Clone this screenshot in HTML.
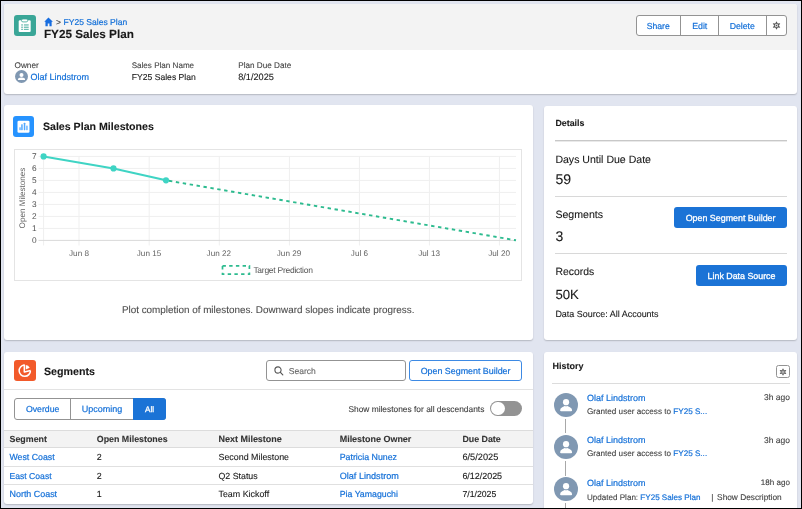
<!DOCTYPE html>
<html><head><meta charset="utf-8">
<style>
*{box-sizing:border-box;margin:0;padding:0}
html,body{width:802px;height:509px;overflow:hidden}
body{background:#e1e5f0;font-family:"Liberation Sans",Arial,sans-serif;color:#181818;position:relative;font-size:10px;text-rendering:geometricPrecision}
.card{position:absolute;background:#fff;border-radius:3px;box-shadow:0 1px 1.5px rgba(0,0,0,.2)}
.abs{position:absolute;white-space:nowrap;line-height:normal;-webkit-text-stroke:.1px}
.lnk,.abs a{-webkit-text-stroke:.2px}
.wb{-webkit-text-stroke:.3px}
a,.lnk{color:#1470d8;text-decoration:none}
.b{font-weight:bold}
.btn{position:absolute;border:1px solid #939393;border-radius:3px;background:#fff}
.btnb{position:absolute;border-radius:3px;background:#1b73d6}
.hr{position:absolute;background:#d8d8d8;height:1px}
</style></head><body>

<!-- header card -->
<div class="card" style="left:3.7px;top:4.4px;width:793.6px;height:89.9px;overflow:hidden">
  <div style="position:absolute;left:0;top:0;right:0;height:45.2px;background:#f3f3f3"></div>
</div>
<div class="abs" style="left:14.3px;top:15px;width:21.4px;height:21.1px;background:#3aa697;border-radius:3px"></div>
<svg class="abs" style="left:14.3px;top:15px" width="21.4" height="21.4" viewBox="0 0 21.4 21.4">
  <rect x="4.7" y="5.3" width="12" height="11.7" rx="1.1" fill="#fff"/>
  <rect x="7.5" y="4" width="6.2" height="2.9" rx="1.45" fill="#fff" stroke="#3aa697" stroke-width=".8"/>
  <g fill="#3aa697" opacity=".75"><rect x="7.2" y="9.3" width="1.7" height="1.3"/><rect x="9.9" y="9.3" width="4.8" height="1.3"/>
  <rect x="7.2" y="11.6" width="1.7" height="1.3"/><rect x="9.9" y="11.6" width="4.8" height="1.3"/>
  <rect x="7.2" y="13.8" width="1.7" height="1.2"/><rect x="9.9" y="13.8" width="4.8" height="1.2"/></g>
</svg>
<svg class="abs" style="left:43.6px;top:17.2px" width="9.2" height="9.6" viewBox="0 0 9.2 9.6"><path d="M4.45 .4 L.3 4.7 H1.45 V9.2 H3.75 V6.4 H5.45 V9.2 H7.65 V4.7 H8.9 Z" fill="#176de0"/></svg>
<svg class="abs" style="left:14.9px;top:70.2px" width="13" height="13" viewBox="0 0 13 13"><circle cx="6.5" cy="6.5" r="6.5" fill="#8098b2"/><circle cx="6.5" cy="4.9" r="2" fill="#fff"/><path d="M2.9 9.9 Q2.9 7.6 6.5 7.6 Q10.1 7.6 10.1 9.9 Z" fill="#fff"/></svg>

<!-- header buttons -->
<div class="btn" style="left:636.1px;top:15px;width:151px;height:21px"></div>
<div class="abs" style="left:680px;top:15px;width:1px;height:21px;background:#939393"></div>
<div class="abs" style="left:718.2px;top:15px;width:1px;height:21px;background:#939393"></div>
<div class="abs" style="left:766px;top:15px;width:1px;height:21px;background:#939393"></div>
<svg class="abs" style="left:771.8px;top:21px" width="9" height="9" viewBox="0 0 10 10"><g fill="#555"><path d="M5 0.2L6.35 2.66L9.16 2.6L7.7 5L9.16 7.4L6.35 7.34L5 9.8L3.65 7.34L0.84 7.4L2.3 5L0.84 2.6L3.65 2.66Z"/></g><circle cx="5" cy="5" r="1.9" fill="#ddd"/><circle cx="5" cy="5" r="0.8" fill="#555"/></svg>

<!-- chart card -->
<div class="card" style="left:3.7px;top:105px;width:529.3px;height:235.2px"></div>
<div class="abs" style="left:13.2px;top:116px;width:21.2px;height:21.4px;background:#2693ff;border-radius:3px"></div>
<svg class="abs" style="left:13.2px;top:116px" width="21.2" height="21.4" viewBox="0 0 21.2 21.4"><rect x="4.5" y="4.7" width="12" height="12" rx="1.3" fill="#fff"/><g fill="#2693ff" opacity=".8"><rect x="6.4" y="11.2" width="1.3" height="3" rx=".4"/><rect x="8.2" y="8.2" width="1.5" height="6" rx=".4"/><rect x="10.8" y="6.8" width="1.5" height="7.4" rx=".4"/><rect x="13.3" y="9.5" width="1.3" height="4.7" rx=".4"/></g></svg>

<div class="abs" style="left:14px;top:148.8px;width:508.2px;height:132px;border:1px solid #e4e4e4"></div>
<svg class="abs" style="left:0;top:0;will-change:transform" width="802" height="509" viewBox="0 0 802 509" font-family="Liberation Sans, Arial, sans-serif" text-rendering="geometricPrecision">
 <g stroke="#efefef" stroke-width="1" fill="none">
  <path d="M38.5 156.4H516M38.5 168.4H516M38.5 180.4H516M38.5 192.4H516M38.5 204.4H516M38.5 216.4H516M38.5 228.4H516"/>
  <path d="M43.6 156V245.5M79 156V245.5M149.2 156V245.5M219.3 156V245.5M289.4 156V245.5M359.4 156V245.5M429.4 156V245.5M499.4 156V245.5"/>
 </g>
 <path d="M38.5 240.4H516" stroke="#d9d9d9" stroke-width="1"/>
 <g font-size="8.3" fill="#505050" text-anchor="end">
  <text x="36.6" y="158.8">7</text><text x="36.6" y="170.8">6</text><text x="36.6" y="182.8">5</text><text x="36.6" y="194.8">4</text><text x="36.6" y="206.8">3</text><text x="36.6" y="218.8">2</text><text x="36.6" y="230.8">1</text><text x="36.6" y="242.8">0</text>
 </g>
 <g font-size="8.15" fill="#636363" text-anchor="middle">
  <text x="79" y="255.8">Jun 8</text><text x="149" y="255.8">Jun 15</text><text x="218.8" y="255.8">Jun 22</text><text x="289" y="255.8">Jun 29</text><text x="359.4" y="255.8">Jul 6</text><text x="429.1" y="255.8">Jul 13</text><text x="499.1" y="255.8">Jul 20</text>
 </g>
 <text font-size="8.1" fill="#666" text-anchor="middle" transform="translate(25.1 198) rotate(-90)">Open Milestones</text>
 <path d="M43.6 156.4L113.5 168.4L166 180.3" stroke="#3fd4c4" stroke-width="2" fill="none" stroke-linejoin="round"/>
 <path d="M166 180.3L516 240.3" stroke="#2dbb8f" stroke-width="1.9" fill="none" stroke-dasharray="3.4 3.6" stroke-dashoffset="-3"/>
 <g fill="#3fd4c4"><circle cx="43.6" cy="156.4" r="3.1"/><circle cx="113.5" cy="168.4" r="3.1"/><circle cx="166" cy="180.3" r="3.1"/></g>
 <rect x="222.5" y="265.8" width="26.9" height="8.4" fill="none" stroke="#2dbb8f" stroke-width="1.7" stroke-dasharray="3.4 3.3"/>
 <text x="253.4" y="273.2" font-size="8.5" fill="#555" textLength="59.5">Target Prediction</text>
</svg>

<!-- details card -->
<div class="card" style="left:544px;top:106px;width:253.3px;height:234.2px"></div>
<div class="hr" style="left:555.4px;top:140px;width:231.6px;height:1px;background:#c8c8c8"></div><div class="hr" style="left:555.4px;top:141px;width:231.6px;height:1px;background:#e9e9e9"></div>
<div class="hr" style="left:555.4px;top:196.1px;width:231.6px"></div>
<div class="btnb" style="left:674.3px;top:207.1px;width:112.7px;height:20.9px"></div>
<div class="hr" style="left:555.4px;top:253.3px;width:231.6px"></div>
<div class="btnb" style="left:696.2px;top:264.6px;width:90.8px;height:21.4px"></div>

<!-- segments card -->
<div class="card" style="left:3.7px;top:352px;width:529.3px;height:151.9px"></div>
<div class="abs" style="left:14.3px;top:360px;width:21.4px;height:21.1px;background:#f25a2a;border-radius:3px"></div>
<svg class="abs" style="left:14.3px;top:360px" width="21.4" height="21.4" viewBox="0 0 21.4 21.4"><path d="M10.3 5.05A5.65 5.65 0 1 0 16.45 10.7" fill="none" stroke="#fff" stroke-width="1.5"/><path d="M10.3 4.5V11.9L16.6 10.5" fill="none" stroke="#fff" stroke-width="1.5" stroke-linejoin="round"/><path d="M11.74 9.5V5.1A4.4 4.4 0 0 1 15.73 7.64Z" fill="#fff"/></svg>
<div class="btn" style="left:265.9px;top:360px;width:140.4px;height:21px"></div>
<svg class="abs" style="left:274.4px;top:366px" width="10" height="10" viewBox="0 0 10 10"><circle cx="4" cy="4" r="3.1" fill="none" stroke="#555" stroke-width="1.1"/><path d="M6.2 6.2L8.8 8.8" stroke="#555" stroke-width="1.2" stroke-linecap="round"/></svg>
<div class="btn" style="left:408.8px;top:360px;width:113px;height:21px;border-color:#3d8ae4"></div>
<div class="hr" style="left:3.7px;top:388.8px;width:529.3px;background:#e3e3e3"></div>
<div class="btn" style="left:14.2px;top:398px;width:151.6px;height:22px"></div>
<div class="abs" style="left:70.2px;top:398px;width:1px;height:22px;background:#939393"></div>
<div class="abs" style="left:133.2px;top:398px;width:32.6px;height:22px;background:#1b73d6;border-radius:0 3px 3px 0"></div>
<div class="abs" style="left:490.2px;top:400.9px;width:31.6px;height:15.4px;border-radius:7.7px;background:#939393"></div>
<div class="abs" style="left:491.3px;top:401.9px;width:13.4px;height:13.4px;border-radius:7px;background:#fff"></div>

<div class="abs" style="left:3.7px;top:430.3px;width:529.3px;height:17.8px;background:#f3f3f3;border-top:1px solid #dcdcdc;border-bottom:1px solid #dcdcdc"></div>
<div class="hr" style="left:3.7px;top:466px;width:529.3px;background:#e0e0e0"></div>
<div class="hr" style="left:3.7px;top:484px;width:529.3px;background:#e0e0e0"></div>

<!-- history card -->
<div class="card" style="left:544px;top:352.2px;width:253.3px;height:165px"></div>
<div class="btn" style="left:776.2px;top:364.6px;width:13.7px;height:13.5px;border-radius:2.5px"></div>
<svg class="abs" style="left:779.1px;top:367.5px" width="8" height="8" viewBox="0 0 10 10"><g fill="#555"><path d="M5 0.2L6.35 2.66L9.16 2.6L7.7 5L9.16 7.4L6.35 7.34L5 9.8L3.65 7.34L0.84 7.4L2.3 5L0.84 2.6L3.65 2.66Z"/></g><circle cx="5" cy="5" r="1.9" fill="#ddd"/><circle cx="5" cy="5" r="0.8" fill="#555"/></svg>
<div class="hr" style="left:552.4px;top:383px;width:237.5px;background:#dcdcdc"></div>
<div class="abs" style="left:565.3px;top:418.7px;width:1.1px;height:14.7px;background:#a8a8a8"></div>
<div class="abs" style="left:565.3px;top:461px;width:1.1px;height:14.8px;background:#a8a8a8"></div>
<div class="abs" style="left:565.3px;top:503.2px;width:1.1px;height:6px;background:#a8a8a8"></div>

<svg class="abs" style="left:553.85px;top:393px" width="24" height="24" viewBox="0 0 24 24"><circle cx="12" cy="12" r="12" fill="#8098b2"/><circle cx="12.05" cy="9.2" r="3.1" fill="#fff"/><path d="M6.1 17.3Q6.1 15 8.2 14.2Q10 13.4 10.6 12.9Q12.05 13.7 13.5 12.9Q14.1 13.4 15.9 14.2Q18.1 15 18.1 17.3Q18.1 18.3 17.1 18.3H7.1Q6.1 18.3 6.1 17.3Z" fill="#fff"/></svg>
<svg class="abs" style="left:553.85px;top:435.3px" width="24" height="24" viewBox="0 0 24 24"><circle cx="12" cy="12" r="12" fill="#8098b2"/><circle cx="12.05" cy="9.2" r="3.1" fill="#fff"/><path d="M6.1 17.3Q6.1 15 8.2 14.2Q10 13.4 10.6 12.9Q12.05 13.7 13.5 12.9Q14.1 13.4 15.9 14.2Q18.1 15 18.1 17.3Q18.1 18.3 17.1 18.3H7.1Q6.1 18.3 6.1 17.3Z" fill="#fff"/></svg>
<svg class="abs" style="left:553.85px;top:477.3px" width="24" height="24" viewBox="0 0 24 24"><circle cx="12" cy="12" r="12" fill="#8098b2"/><circle cx="12.05" cy="9.2" r="3.1" fill="#fff"/><path d="M6.1 17.3Q6.1 15 8.2 14.2Q10 13.4 10.6 12.9Q12.05 13.7 13.5 12.9Q14.1 13.4 15.9 14.2Q18.1 15 18.1 17.3Q18.1 18.3 17.1 18.3H7.1Q6.1 18.3 6.1 17.3Z" fill="#fff"/></svg>

<div style="position:absolute;left:0;top:0;width:802px;height:509px;will-change:transform">
<div class="abs" id="bcg" style="left:55.90px;top:17.00px;font-size:8.50px;color:#404040;">&gt;</div>
<div class="abs lnk" id="bcl" style="left:63.60px;top:17.00px;font-size:8.54px;">FY25 Sales Plan</div>
<div class="abs b" id="ttl" style="left:43.90px;top:28.00px;font-size:11.74px;color:#181818;">FY25 Sales Plan</div>
<div class="abs" id="l1" style="left:14.50px;top:61.00px;font-size:8.22px;color:#444;">Owner</div>
<div class="abs" id="l2" style="left:131.70px;top:61.00px;font-size:8.08px;color:#444;">Sales Plan Name</div>
<div class="abs" id="l3" style="left:238.20px;top:61.00px;font-size:8.17px;color:#444;">Plan Due Date</div>
<div class="abs lnk" id="v1" style="left:30.40px;top:72.00px;font-size:9.02px;">Olaf Lindstrom</div>
<div class="abs" id="v2" style="left:131.70px;top:72.00px;font-size:8.62px;color:#181818;">FY25 Sales Plan</div>
<div class="abs" id="v3" style="left:238.20px;top:72.00px;font-size:9.17px;color:#181818;">8/1/2025</div>
<div class="abs lnk" id="hb1" style="left:646.70px;top:21.00px;font-size:8.66px;">Share</div>
<div class="abs lnk" id="hb2" style="left:692.20px;top:21.00px;font-size:8.77px;">Edit</div>
<div class="abs lnk" id="hb3" style="left:729.70px;top:21.00px;font-size:8.72px;">Delete</div>
<div class="abs b" id="ct" style="left:42.90px;top:121.00px;font-size:10.63px;color:#181818;">Sales Plan Milestones</div>
<div class="abs" id="cap" style="left:121.90px;top:305.00px;font-size:9.88px;color:#4e4e4e;">Plot completion of milestones. Downward slopes indicate progress.</div>
<div class="abs b" id="dt" style="left:555.40px;top:118.00px;font-size:8.85px;color:#181818;">Details</div>
<div class="abs" id="d1" style="left:555.40px;top:154.00px;font-size:10.56px;color:#181818;">Days Until Due Date</div>
<div class="abs" id="d2" style="left:555.40px;top:171.00px;font-size:14.11px;color:#181818;">59</div>
<div class="abs" id="d3" style="left:555.40px;top:209.00px;font-size:10.58px;color:#181818;">Segments</div>
<div class="abs wb" id="db1" style="left:685.70px;top:213.00px;font-size:8.88px;color:#fff;">Open Segment Builder</div>
<div class="abs" id="d4" style="left:555.40px;top:228.00px;font-size:14.00px;color:#181818;">3</div>
<div class="abs" id="d5" style="left:555.40px;top:267.00px;font-size:10.43px;color:#181818;">Records</div>
<div class="abs wb" id="db2" style="left:707.60px;top:271.00px;font-size:8.86px;color:#fff;">Link Data Source</div>
<div class="abs" id="d6" style="left:555.40px;top:287.00px;font-size:13.21px;color:#181818;">50K</div>
<div class="abs" id="d7" style="left:555.40px;top:309.00px;font-size:8.97px;color:#181818;">Data Source: All Accounts</div>
<div class="abs b" id="st" style="left:43.90px;top:366.00px;font-size:10.69px;color:#181818;">Segments</div>
<div class="abs" id="srch" style="left:288.70px;top:366.00px;font-size:8.55px;color:#666;">Search</div>
<div class="abs lnk" id="sb" style="left:420.70px;top:366.00px;font-size:8.88px;">Open Segment Builder</div>
<div class="abs lnk" id="g1" style="left:25.90px;top:404.00px;font-size:8.74px;">Overdue</div>
<div class="abs lnk" id="g2" style="left:81.80px;top:404.00px;font-size:9.02px;">Upcoming</div>
<div class="abs wb" id="g3" style="left:145.10px;top:405.00px;font-size:8.10px;color:#fff;">All</div>
<div class="abs" id="tg" style="left:348.40px;top:404.00px;font-size:8.38px;color:#404040;">Show milestones for all descendants</div>
<div class="abs b" id="h1" style="left:9.50px;top:434.00px;font-size:8.87px;color:#333;">Segment</div>
<div class="abs b" id="h2" style="left:96.80px;top:434.00px;font-size:8.85px;color:#333;">Open Milestones</div>
<div class="abs b" id="h3" style="left:218.50px;top:434.00px;font-size:8.97px;color:#333;">Next Milestone</div>
<div class="abs b" id="h4" style="left:339.70px;top:434.00px;font-size:8.96px;color:#333;">Milestone Owner</div>
<div class="abs b" id="h5" style="left:462.40px;top:434.00px;font-size:8.85px;color:#333;">Due Date</div>
<div class="abs lnk" id="r11" style="left:9.50px;top:452.00px;font-size:8.77px;">West Coast</div>
<div class="abs" id="r12" style="left:96.80px;top:452.00px;font-size:8.90px;color:#181818;">2</div>
<div class="abs" id="r13" style="left:218.50px;top:452.00px;font-size:8.88px;color:#181818;">Second Milestone</div>
<div class="abs lnk" id="r14" style="left:339.70px;top:452.00px;font-size:8.82px;">Patricia Nunez</div>
<div class="abs" id="r15" style="left:462.40px;top:452.00px;font-size:9.22px;color:#181818;">6/5/2025</div>
<div class="abs lnk" id="r21" style="left:9.50px;top:471.00px;font-size:8.62px;">East Coast</div>
<div class="abs" id="r22" style="left:96.80px;top:471.00px;font-size:8.90px;color:#181818;">2</div>
<div class="abs" id="r23" style="left:218.50px;top:471.00px;font-size:8.80px;color:#181818;">Q2 Status</div>
<div class="abs lnk" id="r24" style="left:339.70px;top:471.00px;font-size:9.10px;">Olaf Lindstrom</div>
<div class="abs" id="r25" style="left:462.40px;top:471.00px;font-size:8.94px;color:#181818;">6/12/2025</div>
<div class="abs lnk" id="r31" style="left:9.50px;top:489.00px;font-size:8.93px;">North Coast</div>
<div class="abs" id="r32" style="left:96.80px;top:489.00px;font-size:8.90px;color:#181818;">1</div>
<div class="abs" id="r33" style="left:218.50px;top:489.00px;font-size:8.90px;color:#181818;">Team Kickoff</div>
<div class="abs lnk" id="r34" style="left:339.70px;top:489.00px;font-size:8.77px;">Pia Yamaguchi</div>
<div class="abs" id="r35" style="left:462.40px;top:489.00px;font-size:8.71px;color:#181818;">7/1/2025</div>
<div class="abs b" id="ht" style="left:552.40px;top:361.00px;font-size:9.00px;color:#181818;">History</div>
<div class="abs lnk" id="n1" style="left:587.00px;top:393.00px;font-size:9.00px;">Olaf Lindstrom</div>
<div class="abs" id="t1" style="left:764.10px;top:392.00px;font-size:8.45px;color:#404040;">3h ago</div>
<div class="abs" id="x1" style="left:587.00px;top:407.00px;font-size:8.14px;color:#404040;">Granted user access to <a>FY25 S...</a></div>
<div class="abs lnk" id="n2" style="left:587.00px;top:435.00px;font-size:9.00px;">Olaf Lindstrom</div>
<div class="abs" id="t2" style="left:764.10px;top:435.00px;font-size:8.45px;color:#404040;">3h ago</div>
<div class="abs" id="x2" style="left:587.00px;top:449.00px;font-size:8.14px;color:#404040;">Granted user access to <a>FY25 S...</a></div>
<div class="abs lnk" id="n3" style="left:587.00px;top:478.00px;font-size:9.00px;">Olaf Lindstrom</div>
<div class="abs" id="t3" style="left:760.80px;top:478.00px;font-size:8.05px;color:#404040;">18h ago</div>
<div class="abs" id="x3" style="left:587.00px;top:493.00px;font-size:8.07px;color:#404040;">Updated Plan: <a>FY25 Sales Plan</a></div>
<div class="abs" id="x3b" style="left:711.20px;top:492.00px;font-size:8.30px;color:#404040;">|</div>
<div class="abs" id="x3c" style="left:717.10px;top:492.00px;font-size:8.30px;color:#404040;">Show Description</div>
</div>

<!-- frame -->
<div style="position:absolute;left:0;top:0;width:802px;height:1px;background:#000"></div>
<div style="position:absolute;left:0;top:0;width:1.2px;height:509px;background:#000"></div>
<div style="position:absolute;left:801px;top:0;width:1px;height:509px;background:#000"></div>
<div style="position:absolute;left:0;top:507.7px;width:802px;height:1.3px;background:#000"></div>
</body></html>
